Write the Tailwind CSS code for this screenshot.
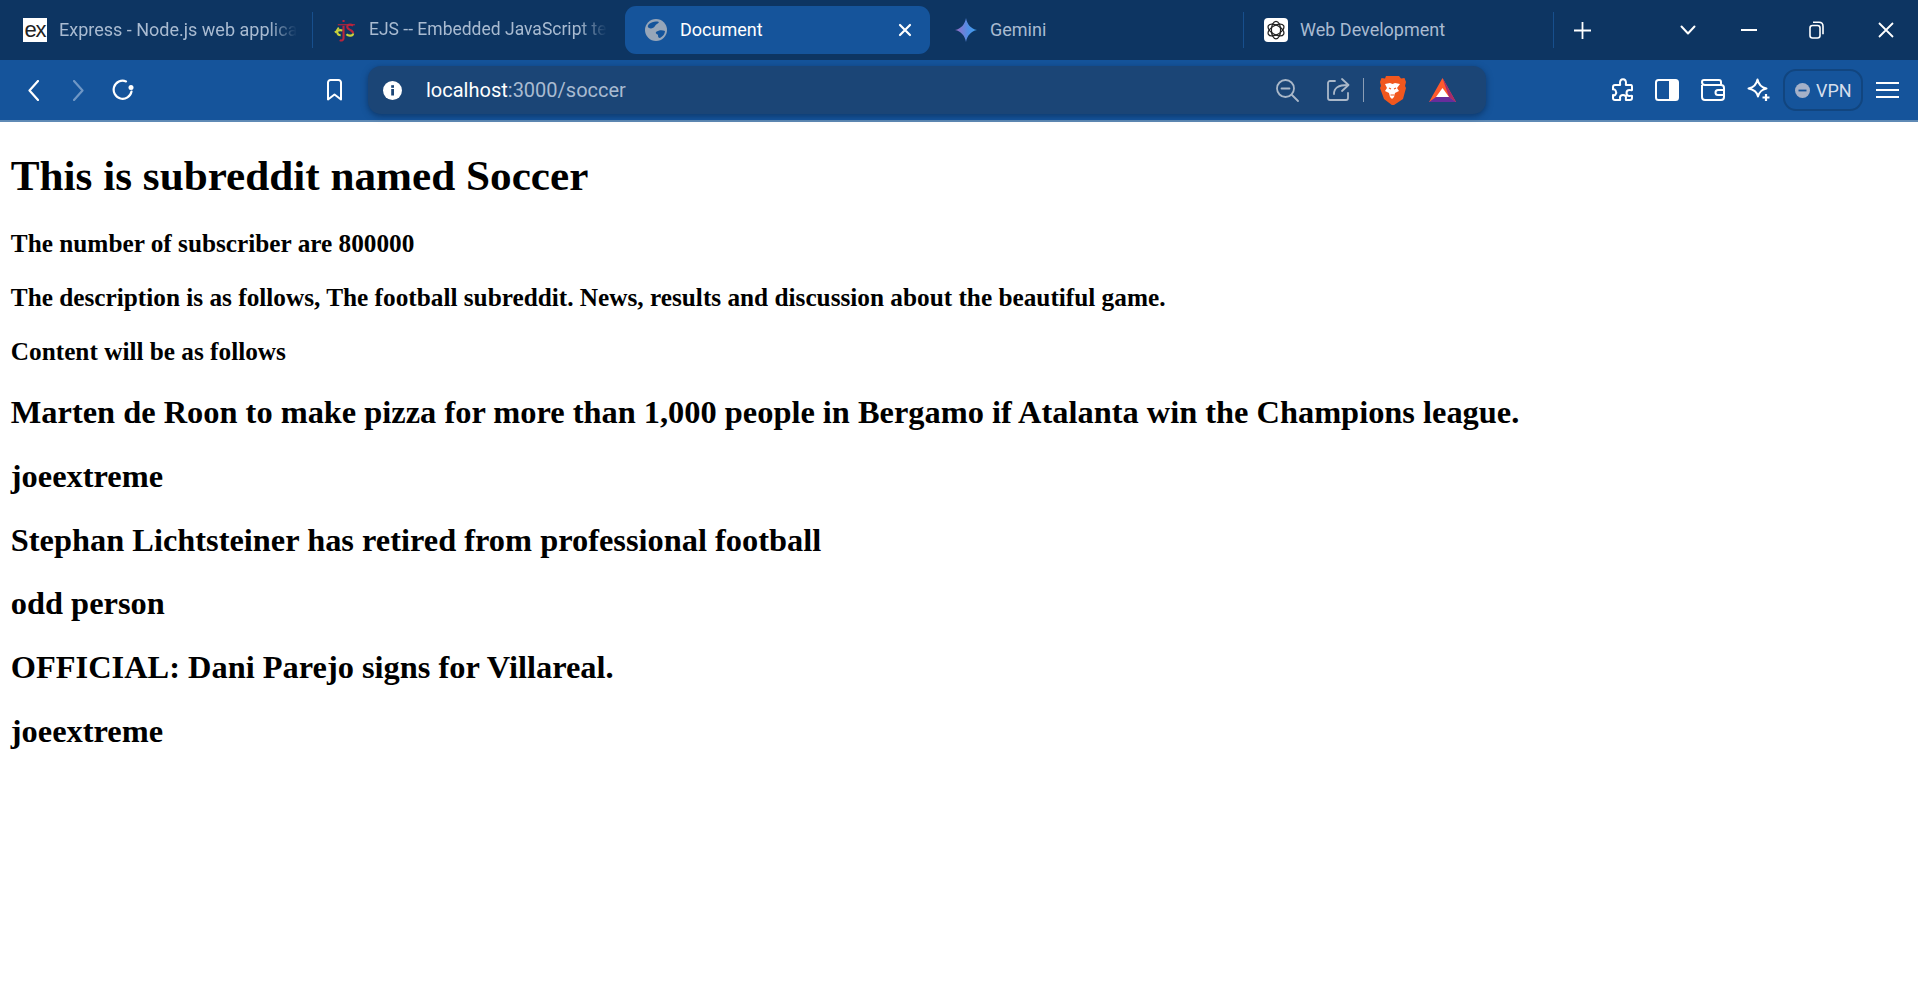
<!DOCTYPE html>
<html lang="en">
<head>
  <meta charset="UTF-8" />
  <title>Document</title>
  <script src="https://cdn.jsdelivr.net/npm/@tailwindcss/browser@4"></script>
</head>
<body class="bg-white min-h-screen overflow-hidden">
  <!-- tab strip -->
  <div class="h-[60px] bg-[#0d3562] flex items-center font-['Roboto',sans-serif] text-[18px] text-[#a9bbd1]">
    <div class="w-[312px] h-full flex items-center pl-[23px]">
      <div class="w-6 h-6 bg-white text-[#222] flex items-center justify-center text-[22px] leading-none font-['Liberation_Sans',sans-serif] tracking-[-1px]">ex</div>
      <span class="ml-3 mb-[2px] w-[238px] overflow-hidden whitespace-nowrap [mask-image:linear-gradient(to_right,black_88%,transparent)]">Express - Node.js web applica</span>
    </div>
    <div class="w-px h-[36px] bg-[#174f8d]"></div>
    <div class="w-[312px] h-full flex items-center pl-[20px]">
      <svg class="w-[23px] h-[23px]" viewBox="0 0 24 24" fill="none" stroke-width="2.2">
        <path d="M2 14c3-3 5-3 8-2" stroke="#c8d23c"/>
        <path d="M6 9c-3 3-2 8 2 8" stroke="#c8d23c"/>
        <path d="M11 1v2M11 7v13c0 2-2 3-4 2" stroke="#b8243c"/>
        <path d="M21 7c-3-2-7-1-6 2s6 2 6 6" stroke="#b8243c"/>
        <path d="M21 15c0 3-5 3-7 1" stroke="#c8d23c"/>
        <path d="M5 6h18" stroke="#b8243c" stroke-width="1.2"/>
      </svg>
      <span class="ml-[13px] mb-[2px] w-[238px] text-[17.5px] overflow-hidden whitespace-nowrap [mask-image:linear-gradient(to_right,black_88%,transparent)]">EJS -- Embedded JavaScript te</span>
    </div>
    <div class="w-[305px] h-[48px] rounded-[11px] bg-[#15549b] flex items-center pl-5 pr-[18px] text-white">
      <svg class="w-[22px] h-[22px] shrink-0" viewBox="0 0 22 22">
        <circle cx="11" cy="11" r="11" fill="#97a6b9"/>
        <path d="M4 5c3-2 6-3 10-2-1 2-3 2-4 4s-4 3-6 2-1-3 0-4zM11 13c3-2 6-2 9-1 0 3-2 5-5 7-2 0-2-2-2-3s-3-1-2-3z" fill="#15549b"/>
      </svg>
      <span class="ml-[13px] mb-[2px]">Document</span>
      <svg class="ml-auto w-[14px] h-[14px]" viewBox="0 0 14 14" stroke="white" stroke-width="2.2" stroke-linecap="round"><path d="M2 2l10 10M12 2L2 12"/></svg>
    </div>
    <div class="w-[313px] h-full flex items-center pl-[25px]">
      <svg class="w-[22px] h-[24px]" viewBox="0 0 22 24">
        <defs><linearGradient id="gem" x1="0" y1="0" x2="1" y2="0"><stop offset="0" stop-color="#9a6cc4"/><stop offset="0.6" stop-color="#4f8fe6"/><stop offset="1" stop-color="#3fa0ee"/></linearGradient></defs>
        <path d="M11 0c1 6 5 11 11 12-6 1-10 6-11 12-1-6-5-11-11-12 6-1 10-6 11-12z" fill="url(#gem)"/>
      </svg>
      <span class="ml-[13px] mb-[2px]">Gemini</span>
    </div>
    <div class="w-px h-[36px] bg-[#174f8d]"></div>
    <div class="w-[309px] h-full flex items-center pl-5">
      <div class="w-6 h-6 rounded-[4px] bg-white flex items-center justify-center">
        <svg class="w-5 h-5" viewBox="0 0 24 24" fill="none" stroke="#222" stroke-width="1.5">
          <ellipse cx="12" cy="12" rx="5.500" ry="10.500"/>
          <ellipse cx="12" cy="12" rx="5.500" ry="10.500" transform="rotate(60 12 12)"/>
          <ellipse cx="12" cy="12" rx="5.500" ry="10.500" transform="rotate(120 12 12)"/>
        </svg>
      </div>
      <span class="ml-3 mb-[2px]">Web Development</span>
    </div>
    <div class="w-px h-[36px] bg-[#174f8d]"></div>
    <svg class="ml-[20px] w-[17px] h-[17px]" viewBox="0 0 17 17" stroke="white" stroke-width="1.8"><path d="M8.500 0v17M0 8.500h17"/></svg>
    <svg class="ml-[89px] w-4 h-[10px]" viewBox="0 0 16 10" fill="none" stroke="white" stroke-width="2" stroke-linecap="round" stroke-linejoin="round"><path d="M1.500 1.500L8 8.500l6.500-7"/></svg>
    <svg class="ml-[45px] w-4 h-[2px]" viewBox="0 0 16 2" stroke="white" stroke-width="2"><path d="M0 1h16"/></svg>
    <svg class="ml-[52px] w-[15px] h-[18px]" viewBox="0 0 15 18" fill="none" stroke="white" stroke-width="1.600"><rect x="1" y="4.500" width="10" height="12.500" rx="2.500"/><path d="M4 1.200h6c2.500 0 4 1.500 4 4v8"/></svg>
    <svg class="ml-[54px] w-[16px] h-[16px]" viewBox="0 0 16 16" stroke="white" stroke-width="1.800"><path d="M1 1l14 14M15 1L1 15"/></svg>
  </div>

  <!-- toolbar -->
  <div class="h-[60px] bg-[#15549b] border-b-2 border-[#5f8ab5] box-content flex items-center text-white">
    <svg class="ml-[28px] w-[11px] h-[21px]" viewBox="0 0 11 21" fill="none" stroke="white" stroke-width="2.200" stroke-linecap="round" stroke-linejoin="round"><path d="M10 1L1.500 10.500 10 20"/></svg>
    <svg class="ml-[34px] w-[11px] h-[21px]" viewBox="0 0 11 21" fill="none" stroke="#6f97c5" stroke-width="2.200" stroke-linecap="round" stroke-linejoin="round"><path d="M1 1l8.500 9.500L1 20"/></svg>
    <svg class="ml-[28px] w-[22px] h-[22px]" viewBox="0 0 22 22" fill="none" stroke="white" stroke-width="2.200" stroke-linecap="round"><path d="M19.500 12.500A9 9 0 1 1 14 2.400"/><circle cx="19" cy="8.500" r="2.500" fill="white" stroke="none"/></svg>
    <svg class="ml-[192px] w-[17px] h-[22px]" viewBox="0 0 17 22" fill="none" stroke="white" stroke-width="2" stroke-linejoin="round"><path d="M2 3.500a2.500 2.500 0 0 1 2.500-2.500h8a2.500 2.500 0 0 1 2.500 2.500V20.500l-6.500-5-6.500 5z"/></svg>

    <!-- address bar -->
    <div class="ml-[25px] w-[1118px] h-[48px] rounded-[13px] bg-[#1b4576] shadow-[0_2px_6px_rgba(8,32,66,0.55)] flex items-center pl-[15px] pr-[30px] font-['Roboto',sans-serif]">
      <svg class="w-[19px] h-[19px]" viewBox="0 0 19 19"><circle cx="9.500" cy="9.500" r="9.500" fill="white"/><rect x="8.200" y="8" width="2.800" height="6.500" fill="#1b4576"/><rect x="8.200" y="4.200" width="2.800" height="2.600" fill="#1b4576"/></svg>
      <span class="ml-[24px] text-[20px]">localhost<span class="text-[#a9bbd1]">:3000/soccer</span></span>
      <svg class="ml-auto w-[24px] h-[24px]" viewBox="0 0 24 24" fill="none" stroke="#aab8c9" stroke-width="1.800" stroke-linecap="round"><circle cx="10.500" cy="10.500" r="8.500"/><path d="M6.500 10.500h8M17 17l6 6"/></svg>
      <svg class="ml-[27px] w-[24px] h-[24px]" viewBox="0 0 24 24" fill="none" stroke="#aab8c9" stroke-width="1.800" stroke-linecap="round" stroke-linejoin="round"><path d="M9 3H4a2 2 0 0 0-2 2v15a2 2 0 0 0 2 2h16a2 2 0 0 0 2-2v-5"/><path d="M8 16c0-6 4-9 14-9"/><path d="M16 1l6.500 6-6.500 6"/></svg>
      <div class="ml-[13px] w-px h-6 bg-[#8a9db5]"></div>
      <svg class="ml-[15px] w-[27px] h-[29px]" viewBox="0 0 27 29">
        <path d="M7 0h13l2 2.500 3.500-.5 1.500 4-1 4 1 2-3 11-9 6-.5.500h-1L5 23 1 12l1-2-1-4 1.500-4L6 2.500z" fill="#f1571e"/>
        <path d="M6 8l5-1 2.500 1 2.500-1 5 1-3 4 2 3-4 2-1 4-2 2-2-2-1-4-4-2 2-3z" fill="white"/>
        <path d="M10 12l2 1M17 12l-2 1M11.500 19h4" stroke="#f1571e" stroke-width="1.200"/>
      </svg>
      <svg class="ml-[23px] w-[27px] h-[24px]" viewBox="0 0 27 24">
        <path d="M13.500 0L27 24H0z" fill="#ff5a2c"/>
        <path d="M13.500 0L27 24l-7-5z" fill="#a8296b"/>
        <path d="M0 24h27l-7-5H7z" fill="#672d9c"/>
        <path d="M13.500 10L7 19h13z" fill="white"/>
      </svg>
    </div>

    <!-- extensions -->
    <svg class="ml-[125px] w-6 h-6" viewBox="0 0 24 24" fill="none" stroke="white" stroke-width="2" stroke-linejoin="round"><path d="M9 5c0-5 6-5 6 0 0 1-.5 1.500 0 2h5c1 0 1 1 1 2v3c-1 .5-1.500 0-2.500 0-4 0-4 6 0 6 1 0 1.500-.5 2.500 0v2c0 1-1 2-2 2h-4c-.5-1 0-1.500 0-2.500 0-3.500-6-3.500-6 0 0 1 .5 1.500 0 2.500H4c-1 0-2-1-2-2v-3c1 .5 2 .5 2.500-.5 2-3-1-6-2.500-5V9c0-1 1-2 2-2h5c.5-.5 0-1 0-2z"/></svg>
    <svg class="ml-5 w-6 h-[22px]" viewBox="0 0 24 22"><rect x="1" y="1" width="22" height="20" rx="2.500" fill="none" stroke="white" stroke-width="2"/><path d="M14 1h7a2 2 0 0 1 2 2v16a2 2 0 0 1-2 2h-7z" fill="white"/></svg>
    <svg class="ml-[22px] w-6 h-[22px]" viewBox="0 0 24 22" fill="none" stroke="white" stroke-width="2" stroke-linejoin="round"><path d="M1 6v12a3 3 0 0 0 3 3h16a3 3 0 0 0 3-3V9a3 3 0 0 0-3-3H4a3 3 0 0 1-3-3 2 2 0 0 1 2-2h15a2 2 0 0 1 2 2v3"/><path d="M23 11h-6a2.500 2.500 0 0 0 0 5h6"/></svg>
    <svg class="ml-[22px] w-6 h-6" viewBox="0 0 24 24" fill="none" stroke="white" stroke-width="2" stroke-linejoin="round"><path d="M10.500 1.500c1 5 4 8 9 9-5 1-7 3-8.500 8-1-5-4-7-9.500-8 5.500-1 8-4 9-9z"/><path d="M19 16v7M15.500 19.500h7" stroke-width="2.200"/></svg>
    <div class="ml-3 w-[80px] h-[42px] rounded-[13px] border-2 border-[#11457f] flex items-center pl-[10px] font-['Roboto',sans-serif] text-[18px] text-[#d5dfec]">
      <svg class="w-[15px] h-[15px]" viewBox="0 0 15 15"><circle cx="7.500" cy="7.500" r="7.500" fill="#a5b1c8"/><path d="M3.500 7.500h8" stroke="#15549b" stroke-width="1.800"/></svg>
      <span class="ml-[6px]">VPN</span>
    </div>
    <svg class="ml-[13px] w-[23px] h-[18px]" viewBox="0 0 23 18" stroke="white" stroke-width="2"><path d="M0 2h23M0 9h23M0 16h23"/></svg>
  </div>

  <!-- page content, browser zoomed to 135% -->
  <main class="px-[10.8px] font-['Liberation_Serif',serif] font-bold text-black">
    <h1 class="text-[43.2px] leading-[1.15] mt-[29px] mb-[27.9px]">This is subreddit named Soccer</h1>
    <h3 class="text-[25.27px] leading-[1.15] mb-[25.3px]">The number of subscriber are 800000</h3>
    <h3 class="text-[25.27px] leading-[1.15] mb-[25.3px]">The description is as follows, The football subreddit. News, results and discussion about the beautiful game.</h3>
    <h3 class="text-[25.27px] leading-[1.15] mb-[27.9px]">Content will be as follows</h3>
    <h2 class="text-[32.4px] leading-[1.15] mb-[26.5px]">Marten de Roon to make pizza for more than 1,000 people in Bergamo if Atalanta win the Champions league.</h2>
    <h2 class="text-[32.4px] leading-[1.15] mb-[26.5px]">joeextreme</h2>
    <h2 class="text-[32.4px] leading-[1.15] mb-[26.5px]">Stephan Lichtsteiner has retired from professional football</h2>
    <h2 class="text-[32.4px] leading-[1.15] mb-[26.5px]">odd person</h2>
    <h2 class="text-[32.4px] leading-[1.15] mb-[26.5px]">OFFICIAL: Dani Parejo signs for Villareal.</h2>
    <h2 class="text-[32.4px] leading-[1.15] mb-[26.5px]">joeextreme</h2>
  </main>
</body>
</html>
